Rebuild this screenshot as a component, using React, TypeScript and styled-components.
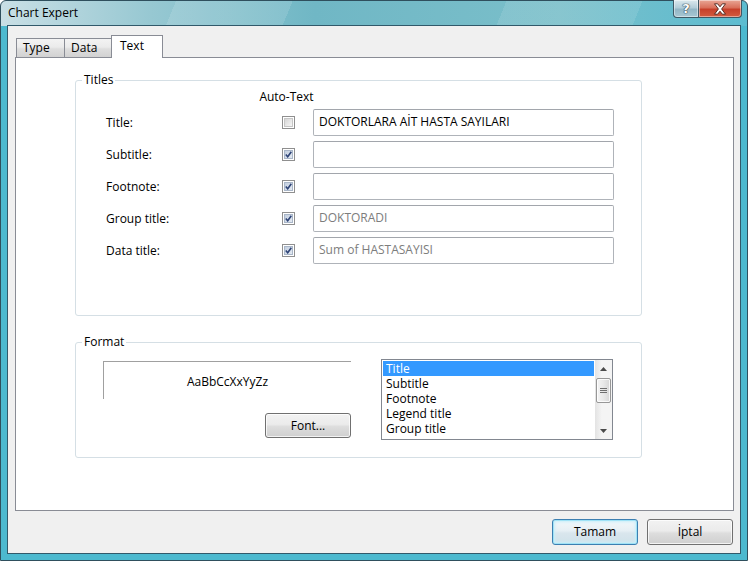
import styled, { createGlobalStyle } from 'styled-components';

const GlobalStyle = createGlobalStyle`
  html, body {
    margin: 0;
    padding: 0;
    background: #ffffff;
  }
  body {
    font-family: "Open Sans", "Liberation Sans", sans-serif;
    font-size: 12px;
    color: #000000;
  }
  * {
    box-sizing: border-box;
  }
`;

const Window = styled.div`
  width: 748px;
  height: 561px;
  display: flex;
  flex-direction: column;
  border: 1px solid #2f4f5d;
  border-radius: 6px 6px 0 0;
  padding: 0 6px 6px;
  background:
    linear-gradient(to bottom, transparent 0 25px, #4cb9cf 25px),
    linear-gradient(112deg, transparent 0 18%, rgba(255, 255, 255, 0.12) 18% 30%, transparent 30% 52%, rgba(255, 255, 255, 0.1) 52% 66%, transparent 66%),
    linear-gradient(to right, #c9dfe5 0%, #97c8d2 20%, #70b7c5 42%, #7abfca 75%, #5cbcd0 100%);
`;

const TitleBar = styled.div`
  height: 24px;
  display: flex;
  align-items: flex-start;
  justify-content: space-between;
  margin: 0 -1px 0 1px;
`;

const TitleText = styled.span`
  padding-top: 4px;
  line-height: 16px;
  color: #000000;
`;

const CaptionGroup = styled.div`
  display: flex;
  margin-top: -1px;
`;

const CaptionButton = styled.div<{ $close?: boolean }>`
  width: ${(p) => (p.$close ? 43 : 26)}px;
  height: 18px;
  display: flex;
  align-items: center;
  justify-content: center;
  border: 1px solid #3e5864;
  border-top: none;
  border-left: ${(p) => (p.$close ? 'none' : '1px solid #3e5864')};
  border-radius: ${(p) => (p.$close ? '0 0 4px 0' : '0 0 0 4px')};
  background: ${(p) =>
    p.$close
      ? 'linear-gradient(to bottom, #e9a796 0%, #d9705b 45%, #c7402a 55%, #d25b3f 100%)'
      : 'linear-gradient(to bottom, #dbe9ee 0%, #b3cdd8 45%, #93b6c5 55%, #a8c7d3 100%)'};
  box-shadow: inset 0 0 0 1px rgba(255, 255, 255, 0.45);
  color: #ffffff;
  font-family: "DejaVu Sans", sans-serif;
  font-weight: bold;
  font-size: 13px;
  line-height: 16px;
  text-shadow: 0 0 1px #2a3a44, 0 0 1px #2a3a44, 0 0 1px #2a3a44;
`;

const Client = styled.div`
  flex: 1;
  display: flex;
  flex-direction: column;
  background: #f0f0f0;
  border: 1px solid #31596a;
  padding: 9px 6px 8px 7px;
`;

const TabStrip = styled.div`
  height: 22px;
  display: flex;
  align-items: flex-end;
  padding-left: 1px;
  position: relative;
  z-index: 1;
`;

const Tab = styled.div<{ $active?: boolean; $width: number }>`
  width: ${(p) => p.$width}px;
  height: ${(p) => (p.$active ? 23 : 19)}px;
  margin-bottom: ${(p) => (p.$active ? -1 : 0)}px;
  margin-left: ${(p) => (p.$active ? -1 : 0)}px;
  padding: ${(p) => (p.$active ? '2px 0 0 8px' : '0 0 0 6px')};
  line-height: ${(p) => (p.$active ? 16 : 18)}px;
  border: 1px solid #898c95;
  border-bottom: none;
  border-right: ${(p) => (p.$active ? '1px solid #898c95' : 'none')};
  background: ${(p) =>
    p.$active
      ? '#ffffff'
      : 'linear-gradient(to bottom, #f3f3f3 0%, #ebebeb 45%, #dedede 55%, #d2d2d2 100%)'};
`;

const Panel = styled.div`
  height: 454px;
  background: #ffffff;
  border: 1px solid #898c95;
  padding: 14px 0 0 59px;
  display: flex;
  flex-direction: column;
  align-items: flex-start;
  gap: 18px;
`;

const Group = styled.fieldset<{ $top: number; $bottom: number }>`
  margin: 0;
  width: 567px;
  min-inline-size: 0;
  border: 1px solid #d5dfe5;
  border-radius: 3px;
  padding: ${(p) => p.$top}px 0 ${(p) => p.$bottom}px 6px;
`;

const Legend = styled.legend`
  padding: 0 2px;
  line-height: 16px;
  color: #000000;
`;

const TitlesGrid = styled.div`
  display: grid;
  grid-template-columns: 158px 37px 301px;
  grid-template-rows: 14px repeat(5, 27px);
  column-gap: 6px;
  row-gap: 5px;
  align-items: center;
  padding-left: 24px;
`;

const AutoTextHead = styled.div`
  grid-column: 2;
  display: flex;
  justify-content: center;
  padding-right: 4px;
  white-space: nowrap;
  line-height: 14px;
`;

const FieldLabel = styled.span`
  grid-column: 1;
  line-height: 16px;
`;

const CheckBox = styled.span`
  justify-self: center;
  width: 13px;
  height: 13px;
  border: 1px solid #8f8f8f;
  background: #ffffff;
  padding: 1px;
  display: flex;
`;

const CheckInner = styled.span<{ $checked?: boolean }>`
  flex: 1;
  display: flex;
  align-items: center;
  justify-content: center;
  border: 1px solid ${(p) => (p.$checked ? '#a9b6c8' : '#c6c6c6')};
  background: ${(p) =>
    p.$checked
      ? 'linear-gradient(135deg, #c3cfe0 0%, #e4eaf2 100%)'
      : 'linear-gradient(135deg, #d6d6d6 0%, #f6f6f6 100%)'};
`;

const TextBox = styled.div<{ $muted?: boolean }>`
  height: 27px;
  border: 1px solid #afb3b9;
  border-top-color: #a2a6ac;
  border-radius: 2px;
  padding-left: 5px;
  line-height: 24px;
  color: ${(p) => (p.$muted ? '#7d7d7d' : '#000000')};
  white-space: nowrap;
  overflow: hidden;
`;

const FormatRow = styled.div`
  display: flex;
  align-items: flex-start;
  padding-left: 21px;
`;

const PreviewColumn = styled.div`
  width: 248px;
  margin-top: 2px;
  display: flex;
  flex-direction: column;
  align-items: flex-end;
  gap: 14px;
`;

const Preview = styled.div`
  align-self: stretch;
  height: 38px;
  border-top: 1px solid #a0a0a0;
  border-left: 1px solid #a0a0a0;
  padding-top: 2px;
  display: flex;
  align-items: center;
  justify-content: center;
`;

const PushButton = styled.div<{ $height: number; $focused?: boolean }>`
  width: 86px;
  height: ${(p) => p.$height}px;
  display: flex;
  align-items: center;
  justify-content: center;
  border: 1px solid ${(p) => (p.$focused ? '#3c7fb1' : '#707070')};
  border-radius: 3px;
  background: ${(p) =>
    p.$focused
      ? 'linear-gradient(to bottom, #f2f8fb 0%, #e6eff4 45%, #d9e6ed 55%, #d0e2ea 100%)'
      : 'linear-gradient(to bottom, #f2f2f2 0%, #ebebeb 45%, #dddddd 55%, #cfcfcf 100%)'};
  box-shadow: ${(p) =>
    p.$focused
      ? 'inset 0 0 0 1px #9fe2f6, inset 0 0 3px 2px #c8eef9'
      : 'inset 0 0 0 1px rgba(255, 255, 255, 0.75)'};
  line-height: 16px;
  color: #000000;
`;

const ListBox = styled.div`
  width: 232px;
  height: 81px;
  margin-left: 30px;
  border: 1px solid #828790;
  background: #ffffff;
  display: flex;
`;

const ListItems = styled.div`
  flex: 1;
  padding: 1px;
  display: flex;
  flex-direction: column;
`;

const ListItem = styled.div<{ $selected?: boolean }>`
  height: 15px;
  line-height: 15px;
  padding-left: 3px;
  white-space: nowrap;
  overflow: hidden;
  background: ${(p) => (p.$selected ? '#3399ff' : 'transparent')};
  color: ${(p) => (p.$selected ? '#ffffff' : '#000000')};
`;

const ScrollBar = styled.div`
  width: 17px;
  display: flex;
  flex-direction: column;
  background: linear-gradient(to right, #e3e3e3 0%, #f4f4f4 40%, #f4f4f4 100%);
`;

const ScrollArrow = styled.div`
  height: 17px;
  display: flex;
  align-items: center;
  justify-content: center;
`;

const ScrollTrack = styled.div`
  flex: 1;
  padding: 1px 1px 0;
`;

const ScrollThumb = styled.div`
  height: 25px;
  border: 1px solid #979797;
  border-radius: 2px;
  background: linear-gradient(to right, #f4f4f4 0%, #e8e8e8 50%, #d6d6d6 100%);
  box-shadow: inset 0 0 0 1px rgba(255, 255, 255, 0.8);
  display: flex;
  align-items: center;
  justify-content: center;
`;

const Footer = styled.div`
  margin-top: 8px;
  padding-right: 1px;
  display: flex;
  justify-content: flex-end;
  gap: 9px;
`;

const CheckMark = () => (
  <svg width="7" height="7" viewBox="0 0 7 7">
    <path d="M0.8 3.6 L2.7 5.8 L6.3 0.8" fill="none" stroke="#2f4477" strokeWidth="1.6" />
  </svg>
);

const Check = ({ checked }: { checked?: boolean }) => (
  <CheckBox>
    <CheckInner $checked={checked}>{checked && <CheckMark />}</CheckInner>
  </CheckBox>
);

const titleRows = [
  { label: 'Title:', auto: false, text: 'DOKTORLARA AİT HASTA SAYILARI', muted: false },
  { label: 'Subtitle:', auto: true, text: '', muted: false },
  { label: 'Footnote:', auto: true, text: '', muted: false },
  { label: 'Group title:', auto: true, text: 'DOKTORADI', muted: true },
  { label: 'Data title:', auto: true, text: 'Sum of HASTASAYISI', muted: true },
];

const listEntries = ['Title', 'Subtitle', 'Footnote', 'Legend title', 'Group title'];

function App() {
  return (
    <>
      <GlobalStyle />
      <Window>
        <TitleBar>
          <TitleText>Chart Expert</TitleText>
          <CaptionGroup>
            <CaptionButton>?</CaptionButton>
            <CaptionButton $close>
              <svg width="14" height="12" viewBox="0 0 14 12">
                <path
                  d="M1.5 0.8 H4.6 L7 3.8 L9.4 0.8 H12.5 L8.6 6 L12.5 11.2 H9.4 L7 8.2 L4.6 11.2 H1.5 L5.4 6 Z"
                  fill="#ffffff"
                  stroke="#4a231a"
                  strokeWidth="0.9"
                />
              </svg>
            </CaptionButton>
          </CaptionGroup>
        </TitleBar>
        <Client>
          <TabStrip>
            <Tab $width={48}>Type</Tab>
            <Tab $width={48}>Data</Tab>
            <Tab $width={52} $active>
              Text
            </Tab>
          </TabStrip>
          <Panel>
            <Group $top={2} $bottom={51}>
              <Legend>Titles</Legend>
              <TitlesGrid>
                <AutoTextHead>Auto-Text</AutoTextHead>
                <span />
                {titleRows.map((row) => [
                  <FieldLabel key={row.label + '-l'}>{row.label}</FieldLabel>,
                  <Check key={row.label + '-c'} checked={row.auto} />,
                  <TextBox key={row.label + '-t'} $muted={row.muted}>
                    {row.text}
                  </TextBox>,
                ])}
              </TitlesGrid>
            </Group>
            <Group $top={9} $bottom={17}>
              <Legend>Format</Legend>
              <FormatRow>
                <PreviewColumn>
                  <Preview>AaBbCcXxYyZz</Preview>
                  <PushButton $height={25}>Font...</PushButton>
                </PreviewColumn>
                <ListBox>
                  <ListItems>
                    {listEntries.map((entry, i) => (
                      <ListItem key={entry} $selected={i === 0}>
                        {entry}
                      </ListItem>
                    ))}
                  </ListItems>
                  <ScrollBar>
                    <ScrollArrow>
                      <svg width="7" height="4" viewBox="0 0 7 4">
                        <path d="M0 4 L3.5 0 L7 4 Z" fill="#4a4a4a" />
                      </svg>
                    </ScrollArrow>
                    <ScrollTrack>
                      <ScrollThumb>
                        <svg width="7" height="7" viewBox="0 0 7 7">
                          <path d="M0 1.5 H7 M0 3.5 H7 M0 5.5 H7" stroke="#6e6e6e" strokeWidth="1" />
                        </svg>
                      </ScrollThumb>
                    </ScrollTrack>
                    <ScrollArrow>
                      <svg width="7" height="4" viewBox="0 0 7 4">
                        <path d="M0 0 L3.5 4 L7 0 Z" fill="#4a4a4a" />
                      </svg>
                    </ScrollArrow>
                  </ScrollBar>
                </ListBox>
              </FormatRow>
            </Group>
          </Panel>
          <Footer>
            <PushButton $height={26} $focused>
              Tamam
            </PushButton>
            <PushButton $height={26}>İptal</PushButton>
          </Footer>
        </Client>
      </Window>
    </>
  );
}

export default App;
